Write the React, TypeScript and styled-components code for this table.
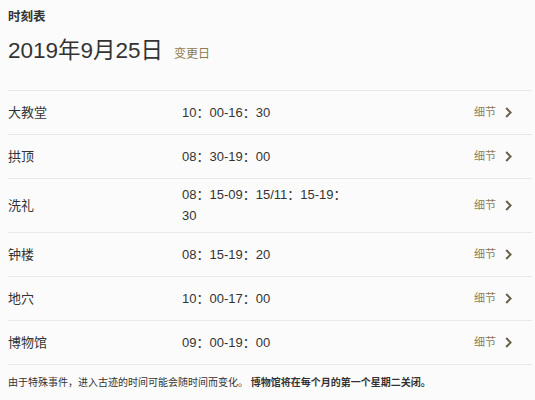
import React from "react";
import styled, { createGlobalStyle } from "styled-components";

const Global = createGlobalStyle`
  html, body { margin: 0; padding: 0; background: #fbfbfb; }
  body { font-family: "Liberation Sans", "Noto Sans CJK SC", sans-serif; color: #333; }
`;

const Page = styled.div`
  padding: 9px 3px 0 8px;
`;

const Title = styled.div`
  font-size: 12.5px;
  font-weight: bold;
  line-height: 16px;
  color: #333;
`;

const DateRow = styled.div`
  display: flex;
  align-items: baseline;
  gap: 11px;
  margin-top: 12px;
  height: 28px;
`;

const DateText = styled.span`
  font-size: 22.5px;
  line-height: 28px;
  color: #333;
`;

const ChangeLink = styled.span`
  font-size: 12px;
  color: #8d7d56;
`;

const List = styled.div`
  margin-top: 25px;
  border-top: 1px solid #e8e8e8;
`;

const Row = styled.div`
  display: flex;
  align-items: center;
  min-height: 44px;
  box-sizing: border-box;
  padding: 5px 0 6px;
  border-bottom: 1px solid #e8e8e8;
  line-height: 21px;
`;

const Name = styled.div`
  width: 174px;
  flex: none;
  font-size: 13px;
  color: #333;
`;

const Time = styled.div`
  width: 170px;
  flex: none;
  font-size: 13px;
  color: #333;
`;

const Detail = styled.div`
  margin-left: auto;
  display: flex;
  align-items: center;
  gap: 9px;
  margin-right: 20px;
  font-size: 11px;
  color: #8d7d56;
`;

const Footer = styled.p`
  margin: 11px 0 0;
  font-size: 10px;
  line-height: 14px;
  color: #333;
`;

const Strong = styled.b`
  font-weight: bold;
`;

const Chevron = () => (
  <svg width="7" height="11" viewBox="0 0 7 11">
    <polyline points="1.2,1 5.6,5.5 1.2,10" fill="none" stroke="#6b604c" strokeWidth="2" />
  </svg>
);

const rows = [
  ["大教堂", "10：00-16：30"],
  ["拱顶", "08：30-19：00"],
  ["洗礼", "08：15-09：15/11：15-19：30"],
  ["钟楼", "08：15-19：20"],
  ["地穴", "10：00-17：00"],
  ["博物馆", "09：00-19：00"],
];

export default function App() {
  return (
    <Page>
      <Global />
      <Title>时刻表</Title>
      <DateRow>
        <DateText>2019年9月25日</DateText>
        <ChangeLink>变更日</ChangeLink>
      </DateRow>
      <List>
        {rows.map(([n, t]) => (
          <Row key={n}>
            <Name>{n}</Name>
            <Time>{t}</Time>
            <Detail>
              细节
              <Chevron />
            </Detail>
          </Row>
        ))}
      </List>
      <Footer>
        由于特殊事件，进入古迹的时间可能会随时间而变化。 <Strong>博物馆将在每个月的第一个星期二关闭。</Strong>
      </Footer>
    </Page>
  );
}
